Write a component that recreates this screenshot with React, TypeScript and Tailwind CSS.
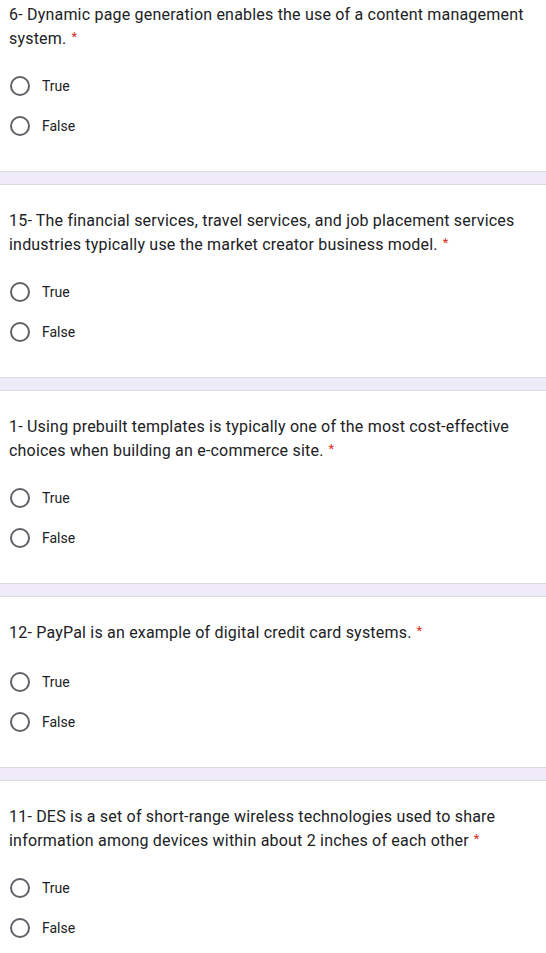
import React from "react";

type Q = { lines: string[]; pt: number; gap: number };

const questions: Q[] = [
  { lines: ["6- Dynamic page generation enables the use of a content management", "system."], pt: 3, gap: 15 },
  { lines: ["15- The financial services, travel services, and job placement services", "industries typically use the market creator business model."], pt: 24, gap: 15 },
  { lines: ["1- Using prebuilt templates is typically one of the most cost-effective", "choices when building an e-commerce site."], pt: 24, gap: 15 },
  { lines: ["12- PayPal is an example of digital credit card systems."], pt: 24, gap: 17 },
  { lines: ["11- DES is a set of short-range wireless technologies used to share", "information among devices within about 2 inches of each other"], pt: 24, gap: 15 },
];

function Option({ label }: { label: string }) {
  return (
    <div className="flex h-10 items-center pl-[10px]">
      <span className="box-border h-5 w-5 rounded-full border-2 border-[#5f6368]" />
      <span className="ml-3 text-[14px] text-[#202124]" style={{ fontFamily: "Roboto, sans-serif" }}>
        {label}
      </span>
    </div>
  );
}

function Question({ q, last }: { q: Q; last: boolean }) {
  return (
    <div>
      <div className="pl-[9px] text-[16px] leading-6 text-[#202124]" style={{ paddingTop: q.pt, fontFamily: "Roboto, 'Open Sans', sans-serif", letterSpacing: "0.2px" }}>
        {q.lines.map((l, i) => (
          <div key={i} className="whitespace-nowrap">
            {l}
            {i === q.lines.length - 1 && (
              <span className="relative top-[-3px] ml-[5px] align-baseline text-[13px] leading-none text-[#d93025]">*</span>
            )}
          </div>
        ))}
      </div>
      <div style={{ marginTop: q.gap }}>
        <Option label="True" />
        <Option label="False" />
      </div>
      {!last && (
        <div className="mt-[25px] h-[14px] border-y border-[#dadce0] bg-[#eeeaf8]" />
      )}
    </div>
  );
}

export default function App() {
  return (
    <div className="min-h-[953px] w-[546px] bg-white">
      {questions.map((q, i) => (
        <Question key={i} q={q} last={i === questions.length - 1} />
      ))}
    </div>
  );
}
